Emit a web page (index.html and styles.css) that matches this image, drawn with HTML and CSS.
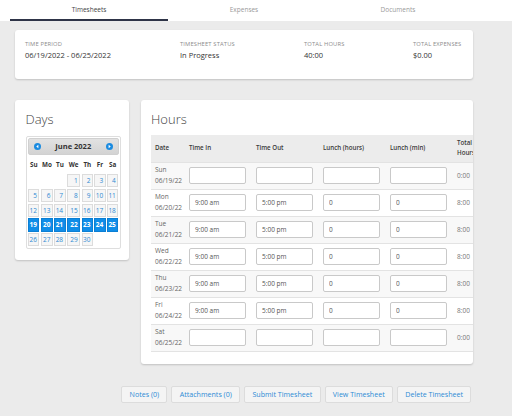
FILE: index.html
```html
<!DOCTYPE html>
<html>
<head>
<meta charset="utf-8">
<link rel="stylesheet" href="styles.css">
</head>
<body>
<nav class="tabs">
  <div class="tab tab-1 active">Timesheets</div>
  <div class="tab tab-2">Expenses</div>
  <div class="tab tab-3">Documents</div>
</nav>
<main class="page">
  <section class="card summary">
    <div class="field"><div class="label">Time Period</div><div class="value">06/19/2022 - 06/25/2022</div></div>
    <div class="field"><div class="label">Timesheet Status</div><div class="value">In Progress</div></div>
    <div class="field"><div class="label">Total Hours</div><div class="value">40:00</div></div>
    <div class="field"><div class="label">Total Expenses</div><div class="value">$0.00</div></div>
  </section>

  <div class="row">
    <section class="card days">
      <h2 class="title">Days</h2>
      <div class="cal">
        <div class="cal-head">
          <span class="arrow prev"><svg width="7" height="7" viewBox="0 0 8 8"><circle cx="4" cy="4" r="4" fill="#1b8be0"/><path d="M5 2 L2.6 4 L5 6 Z" fill="#fff"/></svg></span>
          <span class="cal-title">June 2022</span>
          <span class="arrow next"><svg width="7" height="7" viewBox="0 0 8 8"><circle cx="4" cy="4" r="4" fill="#1b8be0"/><path d="M3 2 L5.4 4 L3 6 Z" fill="#fff"/></svg></span>
        </div>
        <div class="dow"><span>Su</span><span>Mo</span><span>Tu</span><span>We</span><span>Th</span><span>Fr</span><span>Sa</span></div>
        <div class="grid">
          <span class="empty"></span><span class="empty"></span><span class="empty"></span>
          <span class="d">1</span><span class="d">2</span><span class="d">3</span><span class="d">4</span>
          <span class="d">5</span><span class="d">6</span><span class="d">7</span><span class="d">8</span><span class="d">9</span><span class="d">10</span><span class="d">11</span>
          <span class="d">12</span><span class="d">13</span><span class="d">14</span><span class="d">15</span><span class="d">16</span><span class="d">17</span><span class="d">18</span>
          <span class="d sel">19</span><span class="d sel">20</span><span class="d sel">21</span><span class="d sel">22</span><span class="d sel">23</span><span class="d sel">24</span><span class="d sel">25</span>
          <span class="d">26</span><span class="d">27</span><span class="d">28</span><span class="d">29</span><span class="d">30</span>
        </div>
      </div>
    </section>

    <section class="card hours">
      <h2 class="title">Hours</h2>
      <div class="table-wrap">
        <table class="hours-table">
          <colgroup>
            <col class="c-date"><col class="c-in"><col class="c-in"><col class="c-in"><col class="c-in"><col class="c-total">
          </colgroup>
          <thead>
            <tr><th>Date</th><th>Time In</th><th>Time Out</th><th>Lunch (hours)</th><th>Lunch (min)</th><th>Total<br>Hours</th></tr>
          </thead>
          <tbody>
            <tr><td class="date">Sun<br>06/19/22</td><td><input value=""></td><td><input value=""></td><td><input value=""></td><td><input value=""></td><td class="total">0:00</td></tr>
            <tr><td class="date">Mon<br>06/20/22</td><td><input value="9:00 am"></td><td><input value="5:00 pm"></td><td><input value="0"></td><td><input value="0"></td><td class="total">8:00</td></tr>
            <tr><td class="date">Tue<br>06/21/22</td><td><input value="9:00 am"></td><td><input value="5:00 pm"></td><td><input value="0"></td><td><input value="0"></td><td class="total">8:00</td></tr>
            <tr><td class="date">Wed<br>06/22/22</td><td><input value="9:00 am"></td><td><input value="5:00 pm"></td><td><input value="0"></td><td><input value="0"></td><td class="total">8:00</td></tr>
            <tr><td class="date">Thu<br>06/23/22</td><td><input value="9:00 am"></td><td><input value="5:00 pm"></td><td><input value="0"></td><td><input value="0"></td><td class="total">8:00</td></tr>
            <tr><td class="date">Fri<br>06/24/22</td><td><input value="9:00 am"></td><td><input value="5:00 pm"></td><td><input value="0"></td><td><input value="0"></td><td class="total">8:00</td></tr>
            <tr><td class="date">Sat<br>06/25/22</td><td><input value=""></td><td><input value=""></td><td><input value=""></td><td><input value=""></td><td class="total">0:00</td></tr>
          </tbody>
        </table>
      </div>
    </section>
  </div>

  <div class="actions">
    <button class="btn">Notes (0)</button>
    <button class="btn">Attachments (0)</button>
    <button class="btn">Submit Timesheet</button>
    <button class="btn">View Timesheet</button>
    <button class="btn">Delete Timesheet</button>
  </div>
</main>
</body>
</html>
```
FILE: styles.css
```css
* { box-sizing: border-box; }
html, body { margin: 0; padding: 0; }
body {
  background: #ebebeb;
  font-family: "Open Sans", "Noto Sans", sans-serif;
  color: #333;
  width: 512px;
  height: 416px;
  overflow: hidden;
}

.tabs {
  display: flex;
  background: #fff;
  height: 21px;
  padding-left: 10px;
}
.tab {
  height: 21px;
  line-height: 19px;
  text-align: center;
  font-size: 6.5px;
  color: #9a9a9a;
  border-bottom: 2px solid transparent;
}
.tab-1 { width: 158px; }
.tab-2 { width: 152px; }
.tab-3 { width: 156px; }
.tab.active { color: #444; border-bottom-color: #2e3447; }

.page { padding: 9px 39px 0 15px; }

.card {
  background: #fff;
  border-radius: 3px;
  box-shadow: 0 1px 2px rgba(0,0,0,0.18);
}

.summary {
  height: 49px;
  padding: 10px 10px;
  display: grid;
  grid-template-columns: 155px 124px 109px 1fr;
}
.label {
  font-size: 5.8px;
  line-height: 8px;
  color: #8c8c8c;
  text-transform: uppercase;
  letter-spacing: 0.15px;
}
.value {
  margin-top: 2px;
  font-size: 7.5px;
  line-height: 10px;
  color: #333;
}

.row {
  display: flex;
  align-items: flex-start;
  gap: 12px;
  margin-top: 21px;
}

.title {
  margin: 0;
  font-size: 13px;
  line-height: 16px;
  font-weight: 300;
  color: #444;
}

.days {
  width: 114px;
  padding: 11px 8px 11px 10.5px;
}
.days .title { margin-bottom: 8.5px; }

.cal {
  width: 95.5px;
  border: 1px solid #dedede;
  border-radius: 2px;
  padding: 1px 1px 2px 1px;
}
.cal-head {
  height: 17.3px;
  display: flex;
  align-items: center;
  justify-content: space-between;
  padding: 0 5px;
  background: linear-gradient(#e2e2e2, #d3d3d3);
  border: 1px solid #d0d0d0;
  border-radius: 2px;
}
.arrow { display: flex; }
.cal-title {
  font-size: 7.5px;
  font-weight: 700;
  color: #333;
}
.dow {
  height: 19.4px;
  display: grid;
  grid-template-columns: 11.3px 12px 11.3px 13.3px 11.3px 11.3px 11.3px;
  column-gap: 1.4px;
  padding-left: 0.7px;
  align-items: center;
  font-size: 6.3px;
  font-weight: 700;
  text-align: center;
  color: #333;
}
.grid {
  display: grid;
  grid-template-columns: 11.3px 12px 11.3px 13.3px 11.3px 11.3px 11.3px;
  grid-auto-rows: 13.3px;
  column-gap: 1.4px;
  row-gap: 1.4px;
  padding-left: 0.7px;
}
.d {
  border: 1px solid #dcdcdc;
  background: #f6f6f6;
  color: #2f8ad2;
  font-size: 6.5px;
  line-height: 11.3px;
  text-align: right;
  padding-right: 1.5px;
}
.d.sel {
  background: #0f8de8;
  border-color: #0b7fd4;
  color: #fff;
  font-weight: 700;
}

.hours {
  flex: 1;
  padding: 11px 0 12px 10px;
  overflow: hidden;
}
.hours .title { margin-bottom: 8px; }
.table-wrap { overflow: hidden; }
.hours-table {
  border-collapse: collapse;
  table-layout: fixed;
  width: 344px;
}
.c-date { width: 35px; }
.c-in { width: 67px; }
.c-total { width: 41px; }
.hours-table th {
  height: 27px;
  background: #ececec;
  text-align: left;
  font-size: 6.2px;
  font-weight: 600;
  color: #3a3a3a;
  padding: 0 0 0 3px;
  vertical-align: middle;
  line-height: 10px;
  white-space: nowrap;
}
.hours-table th:first-child { padding-left: 4px; }
.hours-table td {
  height: 27px;
  padding: 0 0 0 3px;
  border-top: 1px solid #e3e3e3;
  vertical-align: middle;
}
.hours-table tbody tr:nth-child(odd) td { background: #f8f8f8; }
.hours-table tbody tr:last-child td { border-bottom: 1px solid #e3e3e3; }
.hours-table td.date {
  padding-left: 4px;
  font-size: 6.5px;
  line-height: 10.5px;
  color: #666;
}
.hours-table td.total {
  font-size: 6.5px;
  color: #777;
}
.hours-table input {
  display: block;
  width: 57px;
  height: 17px;
  margin: 0;
  padding: 0 5px;
  border: 1px solid #c9c9c9;
  border-radius: 2px;
  background: #fff;
  font-family: "Open Sans", "Noto Sans", sans-serif;
  font-size: 6.5px;
  color: #555;
  outline: none;
}

.actions {
  display: flex;
  justify-content: flex-end;
  gap: 4px;
  margin-top: 22px;
  padding-right: 1.7px;
}
.btn {
  height: 17px;
  padding: 0 7.3px;
  margin: 0;
  background: #f4f4f4;
  border: 1px solid #dcdcdc;
  border-radius: 2px;
  font-family: "Open Sans", "Noto Sans", sans-serif;
  font-size: 7.1px;
  color: #2d8bd4;
  line-height: 15px;
}
```
